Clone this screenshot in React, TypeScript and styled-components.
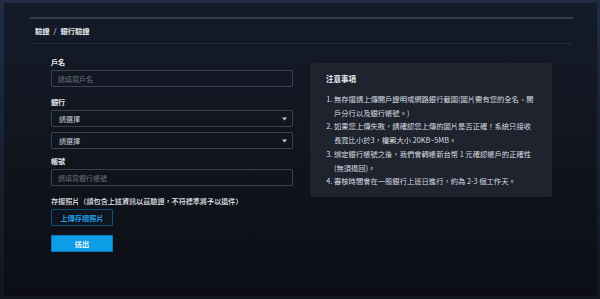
import styled, { createGlobalStyle } from "styled-components";

const GlobalStyle = createGlobalStyle`
  html, body {
    margin: 0;
    padding: 0;
    background: #1c2840;
  }
  * {
    box-sizing: border-box;
  }
  body {
    font-family: "Noto Sans CJK TC", "Noto Sans", sans-serif;
  }
`;

const notes = [
  "無存摺請上傳開戶證明或網路銀行截圖(圖片需有您的全名、開戶分行以及銀行帳號。)",
  "如果您上傳失敗，請確認您上傳的圖片是否正確！系統只接收長寬比小於3，檔案大小 20KB~5MB。",
  "綁定銀行帳號之後，我們會轉帳新台幣 1 元確認帳戶的正確性(無須退回)。",
  "審核時間會在一般銀行上班日進行，約為 2-3 個工作天。",
];

const Caret = () => (
  <svg width="5" height="4" viewBox="0 0 5 4">
    <path d="M0 0.5 H5 L2.5 3.5 Z" fill="#c9ccd3" />
  </svg>
);

const App = () => {
  return (
    <>
      <GlobalStyle />
      <Frame>
        <Page>
          <TopRule />
          <Breadcrumb>
            驗證<Slash>/</Slash>銀行驗證
          </Breadcrumb>
          <SubRule />
          <Body>
            <Form>
              <Label>戶名</Label>
              <Input placeholder="請填寫戶名" />

              <Label $top={10}>銀行</Label>
              <Select>
                請選擇
                <Caret />
              </Select>
              <Select $top={5}>
                請選擇
                <Caret />
              </Select>

              <Label $top={7}>帳號</Label>
              <Input placeholder="請填寫銀行帳號" />

              <Label $top={10} $light>
                存摺照片（請包含上述資訊以茲驗證，不符標準將予以退件）
              </Label>
              <UploadButton>上傳存摺照片</UploadButton>
              <SubmitButton>送出</SubmitButton>
            </Form>

            <Notice>
              <NoticeTitle>注意事項</NoticeTitle>
              <NoticeList>
                {notes.map((n, i) => (
                  <li key={i}>{n}</li>
                ))}
              </NoticeList>
            </Notice>
          </Body>
        </Page>
      </Frame>
    </>
  );
};

const Frame = styled.div`
  width: 600px;
  height: 299px;
  padding: 3px 3px 3px 4px;
  background: linear-gradient(180deg, #1f2c44 0%, #182234 50%, #12161f 100%);
`;

const Page = styled.div`
  height: 100%;
  padding: 14px 24px 0 26px;
  background: linear-gradient(180deg, #141b29 0%, #10141d 55%, #0c0e14 100%);
`;

const TopRule = styled.div`
  height: 2px;
  background: #363d4b;
`;

const Breadcrumb = styled.div`
  height: 24px;
  display: flex;
  align-items: center;
  padding-left: 5px;
  font-size: 7.3px;
  font-weight: 700;
  color: #e4e6ea;
`;

const Slash = styled.span`
  margin: 0 4px;
  font-weight: 400;
`;

const SubRule = styled.div`
  height: 1px;
  background: #232936;
`;

const Body = styled.div`
  display: flex;
  gap: 17px;
  padding-left: 21px;
`;

const Form = styled.div`
  width: 242px;
  padding-top: 13px;
  display: flex;
  flex-direction: column;
  align-items: flex-start;
`;

const Label = styled.div<{ $top?: number; $light?: boolean }>`
  margin-top: ${(p) => p.$top ?? 0}px;
  margin-bottom: 3px;
  height: 10px;
  line-height: 10px;
  font-size: 7.1px;
  font-weight: ${(p) => (p.$light ? 500 : 700)};
  color: #e6e8ec;
  white-space: nowrap;
`;

const Input = styled.input`
  width: 242px;
  height: 17px;
  padding: 0 6px;
  border: 1px solid #3a404d;
  border-radius: 1px;
  background: transparent;
  font-family: inherit;
  font-size: 7px;
  color: #e6e8ec;
  outline: none;
  &::placeholder {
    color: #6c727e;
  }
`;

const Select = styled.div<{ $top?: number }>`
  margin-top: ${(p) => p.$top ?? 0}px;
  width: 242px;
  height: 17px;
  padding: 0 5px 0 7px;
  display: flex;
  align-items: center;
  justify-content: space-between;
  border: 1px solid #3a404d;
  border-radius: 1px;
  font-size: 7px;
  color: #c8ccd3;
`;

const UploadButton = styled.button`
  width: 62px;
  height: 17px;
  padding: 0;
  border: 1px solid #0d4f74;
  border-radius: 1px;
  background: #0e1520;
  font-family: inherit;
  font-size: 7.2px;
  font-weight: 700;
  color: #1e9fe4;
`;

const SubmitButton = styled.button`
  margin-top: 9px;
  width: 62px;
  height: 17px;
  padding: 0;
  border: 1px solid #0b79b6;
  border-radius: 1px;
  background: #0c9de6;
  font-family: inherit;
  font-size: 7.2px;
  font-weight: 700;
  color: #eef6fc;
`;

const Notice = styled.div`
  margin-top: 19px;
  width: 242px;
  height: 134px;
  padding: 11px 15px 0 16px;
  background: #1e232d;
  border-radius: 3px;
`;

const NoticeTitle = styled.div`
  height: 10px;
  line-height: 10px;
  font-size: 7.5px;
  font-weight: 700;
  color: #eceef1;
`;

const NoticeList = styled.ol`
  margin: 9px 0 0;
  padding-left: 8px;
  font-size: 7.3px;
  line-height: 13.7px;
  color: #d8dbe0;
`;

export default App;
